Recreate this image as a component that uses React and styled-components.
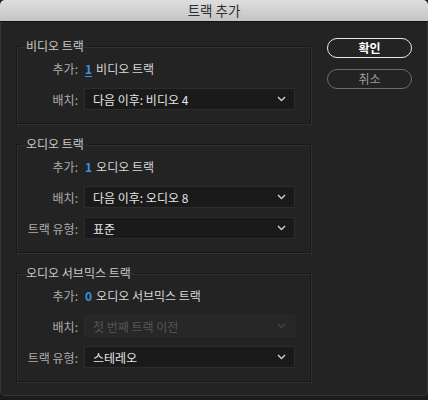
import styled, { createGlobalStyle } from "styled-components";

const Global = createGlobalStyle`
  html, body {
    margin: 0;
    padding: 0;
    background: #1b1b1b;
  }
  * {
    box-sizing: border-box;
  }
`;

const font = `"Noto Sans CJK KR", "Noto Sans", "Liberation Sans", sans-serif`;

const Window = styled.div`
  width: 428px;
  height: 396px;
  background: #232323;
  border-radius: 5px;
  overflow: hidden;
  box-shadow: inset 0 0 0 1px #353535;
  font-family: ${font};
  display: flex;
  flex-direction: column;
`;

const TitleBar = styled.div`
  height: 22px;
  flex: none;
  background: linear-gradient(#dedede, #c4c4c4);
  border-bottom: 1px solid #111;
  display: flex;
  align-items: center;
  justify-content: center;
  color: #2e2e2e;
  font-size: 13.5px;
  line-height: 1;
`;

const Body = styled.div`
  display: flex;
  gap: 16px;
  padding: 16px 16px 0 16px;
`;

const Column = styled.div`
  width: 295px;
  display: flex;
  flex-direction: column;
  gap: 12px;
`;

const Group = styled.fieldset`
  margin: 0;
  padding: 3px 15px 13px 0;
  min-inline-size: 0;
  border: 1px solid #181818;
  box-shadow: 1px 1px 0 #303030, inset 1px 1px 0 #303030;
  display: flex;
  flex-direction: column;
  gap: 9px;
`;

const Legend = styled.legend`
  margin-left: 5px;
  padding: 0 4px;
  font-size: 12px;
  line-height: 16px;
  color: #c8c8c8;
`;

const Row = styled.div`
  display: grid;
  grid-template-columns: 61px 1fr;
  column-gap: 6px;
  align-items: center;
  height: 22px;
`;

const Label = styled.span`
  text-align: right;
  font-size: 12px;
  color: #ababab;
  white-space: nowrap;
`;

const Count = styled.span`
  display: flex;
  align-items: center;
  gap: 4px;
  font-size: 12px;
  color: #d6d6d6;
  padding-left: 1px;
`;

const Num = styled.span`
  color: #3d8fe0;
  font-weight: 700;
  text-decoration: ${(p) => (p.$underline ? "underline" : "none")};
  text-underline-offset: 2px;
`;

const Select = styled.div`
  height: 22px;
  display: flex;
  align-items: center;
  justify-content: space-between;
  padding: 0 8px 0 8px;
  background: ${(p) => (p.$disabled ? "#272727" : "#1a1a1a")};
  border: 1px solid ${(p) => (p.$disabled ? "#2a2a2a" : "#2c2c2c")};
  color: ${(p) => (p.$disabled ? "#555" : "#e4e4e4")};
  font-size: 12px;
`;

const Buttons = styled.div`
  width: 85px;
  display: flex;
  flex-direction: column;
  gap: 11px;
`;

const Button = styled.button`
  height: 20px;
  border-radius: 10px;
  background: transparent;
  font-family: ${font};
  font-size: 12px;
  line-height: 1;
  padding: 0;
  border: 1.5px solid ${(p) => (p.$primary ? "#e8e8e8" : "#6c6c6c")};
  color: ${(p) => (p.$primary ? "#ffffff" : "#9a9a9a")};
  font-weight: ${(p) => (p.$primary ? 700 : 400)};
`;

function Chevron({ disabled }) {
  return (
    <svg width="9" height="6" viewBox="0 0 9 6">
      <polyline
        points="1,1 4.5,4.5 8,1"
        fill="none"
        stroke={disabled ? "#444" : "#d0d0d0"}
        strokeWidth="1.4"
      />
    </svg>
  );
}

function Dropdown({ label, value, disabled }) {
  return (
    <Row>
      <Label>{label}</Label>
      <Select $disabled={disabled}>
        <span>{value}</span>
        <Chevron disabled={disabled} />
      </Select>
    </Row>
  );
}

function AddRow({ n, text, underline }) {
  return (
    <Row>
      <Label>추가:</Label>
      <Count>
        <Num $underline={underline}>{n}</Num>
        {text}
      </Count>
    </Row>
  );
}

export default function App() {
  return (
    <>
      <Global />
      <Window>
        <TitleBar>트랙 추가</TitleBar>
        <Body>
          <Column>
            <Group>
              <Legend>비디오 트랙</Legend>
              <AddRow n="1" text="비디오 트랙" underline />
              <Dropdown label="배치:" value="다음 이후: 비디오 4" />
            </Group>
            <Group>
              <Legend>오디오 트랙</Legend>
              <AddRow n="1" text="오디오 트랙" />
              <Dropdown label="배치:" value="다음 이후: 오디오 8" />
              <Dropdown label="트랙 유형:" value="표준" />
            </Group>
            <Group>
              <Legend>오디오 서브믹스 트랙</Legend>
              <AddRow n="0" text="오디오 서브믹스 트랙" />
              <Dropdown label="배치:" value="첫 번째 트랙 이전" disabled />
              <Dropdown label="트랙 유형:" value="스테레오" />
            </Group>
          </Column>
          <Buttons>
            <Button $primary>확인</Button>
            <Button>취소</Button>
          </Buttons>
        </Body>
      </Window>
    </>
  );
}
